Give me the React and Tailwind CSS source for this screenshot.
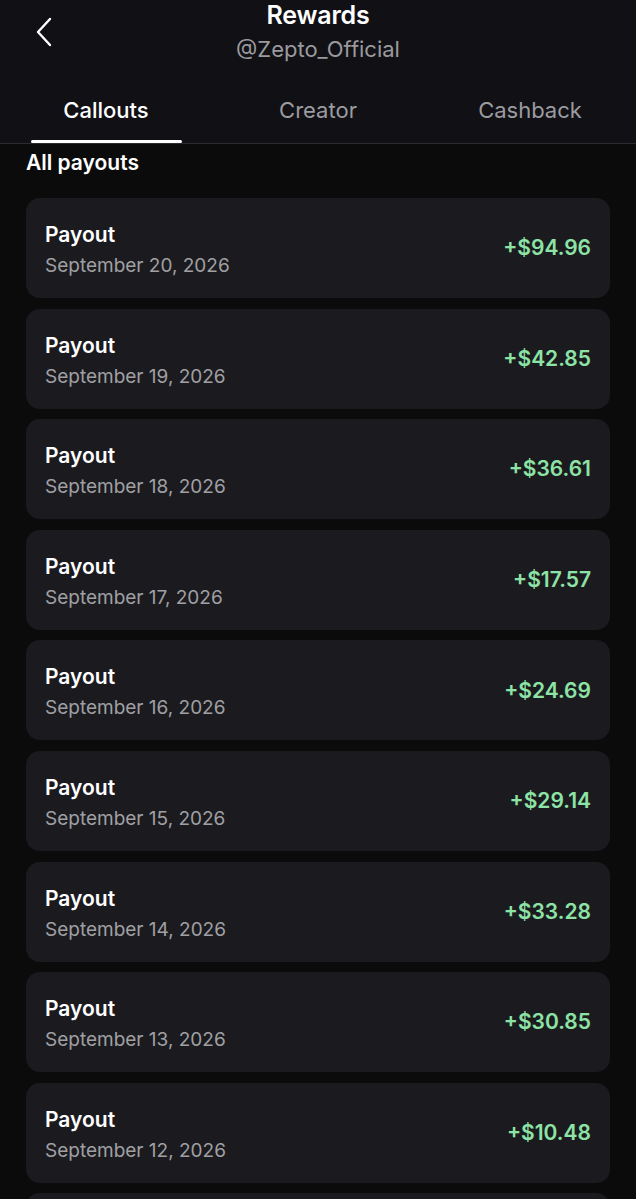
const payouts = [
  { date: 'September 20, 2026', amount: '+$94.96' },
  { date: 'September 19, 2026', amount: '+$42.85' },
  { date: 'September 18, 2026', amount: '+$36.61' },
  { date: 'September 17, 2026', amount: '+$17.57' },
  { date: 'September 16, 2026', amount: '+$24.69' },
  { date: 'September 15, 2026', amount: '+$29.14' },
  { date: 'September 14, 2026', amount: '+$33.28' },
  { date: 'September 13, 2026', amount: '+$30.85' },
  { date: 'September 12, 2026', amount: '+$10.48' },
]

const tabs = ['Callouts', 'Creator', 'Cashback']

export default function App() {
  return (
    <div className="w-[636px] h-[1199px] overflow-hidden bg-[#0b0b0c] text-white font-['Inter',sans-serif]">
      <header className="bg-[#111115] relative">
        <button className="absolute left-[34px] top-[16px] w-[20px] h-[32px] flex items-center justify-center">
          <svg width="18" height="30" viewBox="0 0 18 30" fill="none">
            <path d="M15 2 L3 15 L15 28" stroke="white" strokeWidth="2.4" strokeLinecap="round" strokeLinejoin="round" />
          </svg>
        </button>
        <div className="flex flex-col items-center">
          <h1 className="text-[25px] font-semibold leading-[30px] tracking-[-0.2px]">Rewards</h1>
          <p className="text-[22px] leading-[26px] mt-[6px] text-[#9a9a9e]">@Zepto_Official</p>
        </div>
        <nav className="grid grid-cols-3 mt-[34px] border-b border-[#2c2c30]">
          {tabs.map((t, i) => (
            <div key={t} className="flex flex-col items-center">
              <span className={`text-[22px] leading-[28px] ${i === 0 ? 'text-white font-medium' : 'text-[#9c9ca0]'}`}>{t}</span>
              <span className={`mt-[16px] h-[3px] w-[151px] rounded-full ${i === 0 ? 'bg-white' : 'bg-transparent'}`} />
            </div>
          ))}
        </nav>
      </header>

      <main className="px-[26px]">
        <h2 className="text-[21px] font-semibold leading-[28px] mt-[5px] mb-[21px]">All payouts</h2>
        <div className="flex flex-col gap-[10.6px]">
          {payouts.map((p) => (
            <div key={p.date} className="h-[100px] rounded-[14px] bg-[#1b1b1f] flex items-center justify-between px-[19px]">
              <div className="self-start pt-[24px] flex flex-col">
                <span className="text-[21px] font-semibold leading-[26px]">Payout</span>
                <span className="text-[19px] leading-[24px] mt-[6px] text-[#a0a0a4]">{p.date}</span>
              </div>
              <span className="text-[21px] font-semibold text-[#8de3a6]">{p.amount}</span>
            </div>
          ))}
          <div className="h-[100px] rounded-[14px] bg-[#1b1b1f]" />
        </div>
      </main>
    </div>
  )
}
